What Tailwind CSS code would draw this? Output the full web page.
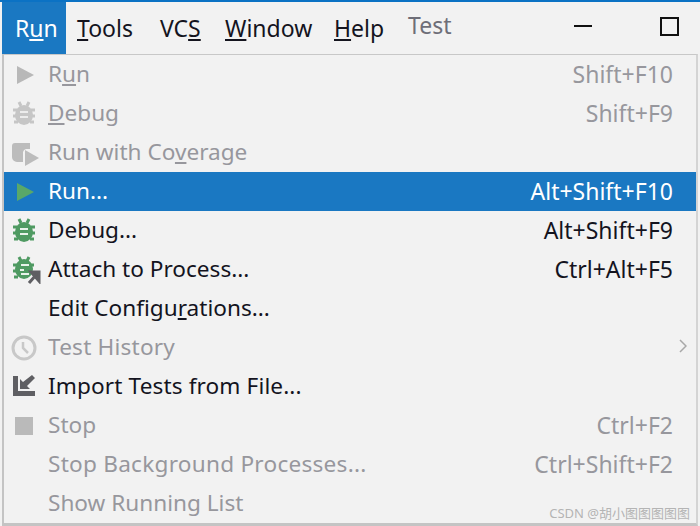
<!DOCTYPE html>
<html lang="en">

<head>
  <meta charset="UTF-8">
  <title>Run menu</title>
  <script src="https://cdn.jsdelivr.net/npm/@tailwindcss/browser@4"></script>
</head>

<body>
  <div class="relative w-[700px] h-[526px] overflow-hidden bg-[#f2f2f2] text-[23px] leading-none text-[#14141e] font-['Noto_Sans','Open_Sans',sans-serif]">
    <div class="h-[2px] bg-[#0b72c4]"></div>

    <!-- menu bar -->
    <div class="flex items-stretch h-[52px] pl-[2px]">
      <div class="flex items-center w-[64px] pl-[13px] bg-[#1a78c2] text-white"><span>R<u class="underline-offset-2">u</u>n</span></div>
      <div class="flex items-center ml-[11px] w-[83px]"><span><u class="underline-offset-2">T</u>ools</span></div>
      <div class="flex items-center w-[65px]"><span>VC<u class="underline-offset-2">S</u></span></div>
      <div class="flex items-center w-[109px]"><span><u class="underline-offset-2">W</u>indow</span></div>
      <div class="flex items-center w-[74px]"><span><u class="underline-offset-2">H</u>elp</span></div>
      <div class="flex items-center text-[#6e6e78] pb-[5px]"><span>Test</span></div>
      <div class="flex items-center ml-auto pr-[21px] gap-[68px] pb-[4px]">
        <div class="w-[18px] h-[2px] bg-[#111]"></div>
        <div class="w-[19px] h-[19px] border-2 border-[#111]"></div>
      </div>
    </div>

    <!-- dropdown -->
    <div class="h-[472px] text-[22.6px] border-t border-t-[#c8c8c8] border-l-2 border-l-[#c4c4c4] border-r-2 border-r-[#d4d4d4] border-b-[3px] border-b-[#c4c4c4] mx-[2px] [&>div>span]:mb-[1px]">
      <div class="flex items-center h-[39px] text-[#97979d]">
        <svg class="w-[44px] h-[20px] shrink-0" viewBox="0 0 44 20"><path d="M13 1l17 9-17 9z" fill="#b8b8b8"/></svg>
        <span>R<u class="underline-offset-2">u</u>n</span>
        <span class="ml-auto pr-[23px] text-[23px]">Shift+F10</span>
      </div>
      <div class="flex items-center h-[39px] text-[#97979d]">
        <svg class="w-[44px] h-[26px] shrink-0" viewBox="0 0 44 26">
          <path d="M9 9h4M31 9h-4M9 15h4M31 15h-4M10 21h4M30 21h-4M15 1l2 4M25 1l-2 4" stroke="#c6c6c6" stroke-width="3" fill="none"/>
          <ellipse cx="20" cy="14" rx="9" ry="10" fill="#c6c6c6"/>
          <path d="M16 11h8M16 16h8" stroke="#ececec" stroke-width="2"/>
        </svg>
        <span><u class="underline-offset-2">D</u>ebug</span>
        <span class="ml-auto pr-[23px] text-[23px]">Shift+F9</span>
      </div>
      <div class="flex items-center h-[39px] text-[#97979d]">
        <svg class="w-[44px] h-[26px] shrink-0" viewBox="0 0 44 26">
          <path d="M8 6a3 3 0 0 1 3-3h15v6h-4a4 4 0 0 0-3 3v10h-6a5 5 0 0 1-5-5z" fill="#bcbcbc"/>
          <path d="M21 10l14 8-14 8z" fill="#bcbcbc"/>
        </svg>
        <span>Run with Co<u class="underline-offset-2">v</u>erage</span>
      </div>
      <div class="flex items-center h-[39px] bg-[#1a78c2] text-white">
        <svg class="w-[44px] h-[20px] shrink-0" viewBox="0 0 44 20"><path d="M13 1l17 9-17 9z" fill="#59a869"/></svg>
        <span>Run...</span>
        <span class="ml-auto pr-[23px] text-[23px]">Alt+Shift+F10</span>
      </div>
      <div class="flex items-center h-[39px]">
        <svg class="w-[44px] h-[26px] shrink-0" viewBox="0 0 44 26">
          <path d="M9 9h4M31 9h-4M9 15h4M31 15h-4M10 21h4M30 21h-4M15 1l2 4M25 1l-2 4" stroke="#4f9a62" stroke-width="3" fill="none"/>
          <ellipse cx="20" cy="14" rx="9" ry="10" fill="#4f9a62"/>
          <path d="M16 11h8M16 16h8" stroke="#e8f2ea" stroke-width="2"/>
        </svg>
        <span>Debug...</span>
        <span class="ml-auto pr-[23px] text-[23px]">Alt+Shift+F9</span>
      </div>
      <div class="flex items-center h-[39px]">
        <svg class="w-[44px] h-[28px] shrink-0" viewBox="0 0 44 28">
          <path d="M9 9h4M30 9h-4M9 15h4M10 21h4M15 1l2 4M25 1l-2 4" stroke="#4f9a62" stroke-width="3" fill="none"/>
          <ellipse cx="20" cy="13" rx="9" ry="10" fill="#4f9a62"/>
          <path d="M17 9h8M16 14h4M17 18h8" stroke="#e8f2ea" stroke-width="2"/>
          <path d="M25 27l7-8M27 16h8v9z" stroke="#5f5f63" stroke-width="3" fill="#5f5f63"/>
        </svg>
        <span>Attach to Process...</span>
        <span class="ml-auto pr-[23px] text-[23px]">Ctrl+Alt+F5</span>
      </div>
      <div class="flex items-center h-[39px] pl-[44px]">
        <span>Edit Config<span>u</span><u class="underline-offset-2">r</u>ations...</span>
      </div>
      <div class="flex items-center h-[39px] text-[#97979d]">
        <svg class="w-[44px] h-[26px] shrink-0" viewBox="0 0 44 26">
          <circle cx="20" cy="13" r="11" fill="none" stroke="#c8c8c8" stroke-width="3"/>
          <path d="M19 7v6l5 5" fill="none" stroke="#c8c8c8" stroke-width="2.500"/>
        </svg>
        <span class="tracking-[0.2px]">Test History</span>
        <svg class="ml-auto mr-[9px] mb-[3px] w-[8px] h-[14px]" viewBox="0 0 8 14"><path d="M1 1l6 6-6 6" fill="none" stroke="#a8a8a8" stroke-width="1.500"/></svg>
      </div>
      <div class="flex items-center h-[39px]">
        <svg class="w-[44px] h-[26px] shrink-0" viewBox="0 0 44 26">
          <path d="M9 2h5v15h17v5H9z" fill="#5f5f63"/>
          <path d="M16 15V5l3 3 9-7 3 3-8 8 3 3z" fill="#5f5f63"/>
        </svg>
        <span class="tracking-[0.12px]">Import Tests from File...</span>
      </div>
      <div class="flex items-center h-[39px] text-[#97979d]">
        <svg class="w-[44px] h-[20px] shrink-0" viewBox="0 0 44 20"><rect x="11" y="1" width="18" height="18" fill="#bababa"/></svg>
        <span>Stop</span>
        <span class="ml-auto pr-[23px] text-[23px]">Ctrl+F2</span>
      </div>
      <div class="flex items-center h-[39px] pl-[44px] text-[#97979d]">
        <span class="tracking-[0.25px]">Stop Background Processes...</span>
        <span class="ml-auto pr-[23px] text-[23px]">Ctrl+Shift+F2</span>
      </div>
      <div class="flex items-center h-[39px] pl-[44px] text-[#97979d]">
        <span>Show Running List</span>
      </div>
    </div>

    <!-- watermark -->
    <div class="absolute right-[10px] bottom-[6px] text-[13px] text-[#b4b4b4] font-['Noto_Sans','Noto_Sans_CJK_SC',sans-serif]">CSDN @胡小图图图图图</div>
  </div>
</body>

</html>
